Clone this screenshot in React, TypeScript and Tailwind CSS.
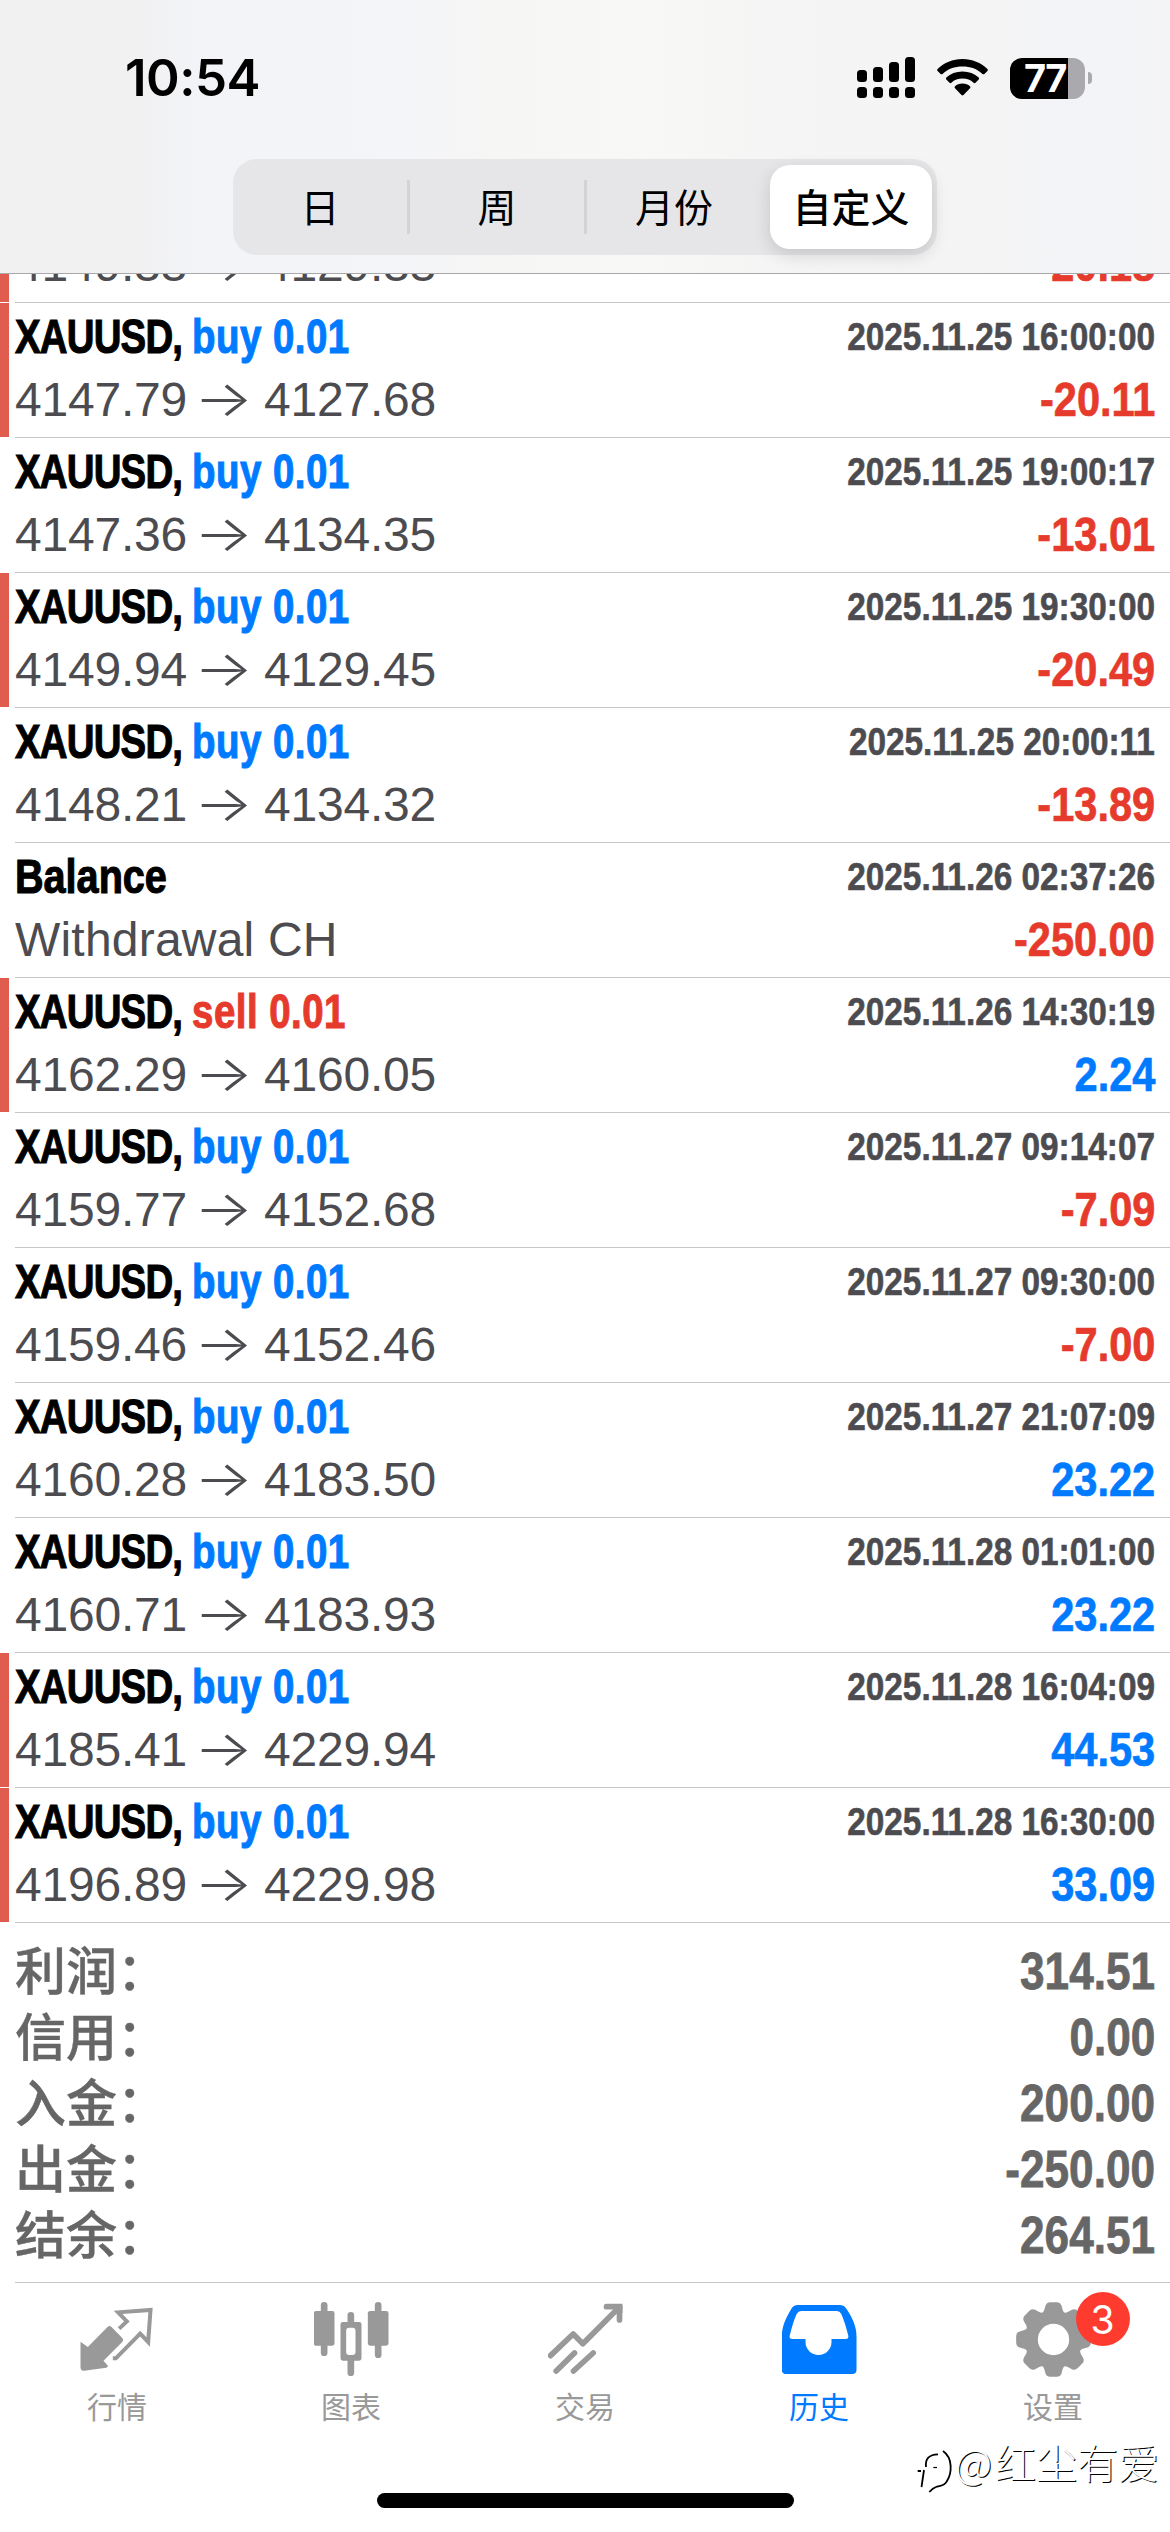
import { useState } from "react";
import type { ReactNode } from "react";
import clsx from "clsx";

type Deal = {
  symbol?: string;
  side?: "buy" | "sell";
  open?: string;
  close?: string;
  note?: string;
  time?: string;
  profit: string;
  marked?: boolean;
};

// the row that is scrolled halfway under the header
const SCROLLED: Deal = { open: "4149.33", close: "4129.33", profit: "-20.18", marked: true };

const DEALS: Deal[] = [
  { symbol: "XAUUSD", side: "buy", open: "4147.79", close: "4127.68", time: "2025.11.25 16:00:00", profit: "-20.11", marked: true },
  { symbol: "XAUUSD", side: "buy", open: "4147.36", close: "4134.35", time: "2025.11.25 19:00:17", profit: "-13.01" },
  { symbol: "XAUUSD", side: "buy", open: "4149.94", close: "4129.45", time: "2025.11.25 19:30:00", profit: "-20.49", marked: true },
  { symbol: "XAUUSD", side: "buy", open: "4148.21", close: "4134.32", time: "2025.11.25 20:00:11", profit: "-13.89" },
  { symbol: "Balance", note: "Withdrawal CH", time: "2025.11.26 02:37:26", profit: "-250.00" },
  { symbol: "XAUUSD", side: "sell", open: "4162.29", close: "4160.05", time: "2025.11.26 14:30:19", profit: "2.24", marked: true },
  { symbol: "XAUUSD", side: "buy", open: "4159.77", close: "4152.68", time: "2025.11.27 09:14:07", profit: "-7.09" },
  { symbol: "XAUUSD", side: "buy", open: "4159.46", close: "4152.46", time: "2025.11.27 09:30:00", profit: "-7.00" },
  { symbol: "XAUUSD", side: "buy", open: "4160.28", close: "4183.50", time: "2025.11.27 21:07:09", profit: "23.22" },
  { symbol: "XAUUSD", side: "buy", open: "4160.71", close: "4183.93", time: "2025.11.28 01:01:00", profit: "23.22" },
  { symbol: "XAUUSD", side: "buy", open: "4185.41", close: "4229.94", time: "2025.11.28 16:04:09", profit: "44.53", marked: true },
  { symbol: "XAUUSD", side: "buy", open: "4196.89", close: "4229.98", time: "2025.11.28 16:30:00", profit: "33.09", marked: true },
];

const TOTALS = [
  { label: "利润：", value: "314.51" },
  { label: "信用：", value: "0.00" },
  { label: "入金：", value: "200.00" },
  { label: "出金：", value: "-250.00" },
  { label: "结余：", value: "264.51" },
];

const PERIODS = [
  { label: "日", width: "w-[177px]", divider: true },
  { label: "周", width: "w-[177px]", divider: true },
  { label: "月份", width: "w-[174px]", divider: false },
  { label: "自定义", width: "w-[176px]", divider: false },
];

export default function App() {
  const [period, setPeriod] = useState("自定义");
  const [tab, setTab] = useState("历史");

  return (
    <div className="relative flex h-[2532px] w-[1170px] flex-col overflow-hidden bg-white font-['Liberation_Sans','Noto_Sans_CJK_SC',sans-serif]">
      <header className="h-[274px] shrink-0 border-b border-[#a8a8aa] bg-[linear-gradient(90deg,#f1f1f1_0%,#f1f1f2_12%,#f3f4f8_18%,#f4f5f9_33%,#f6f6f5_42%,#f8f8f6_55%,#f5f5f5_66%,#f4f4f5_86%,#f3f4f8_92%,#f4f4f6_100%)]">
        <StatusBar />
        <div className="mx-auto mt-[19px] flex h-24 w-[704px] rounded-[24px] bg-[#e6e6e8]">
          {PERIODS.map((p) => (
            <button
              key={p.label}
              onClick={() => setPeriod(p.label)}
              className={clsx("flex items-center", p.width)}
            >
              <span
                className={clsx(
                  "flex h-[84px] items-center justify-center pb-1 text-[39px] leading-none text-black",
                  "font-['Noto_Sans_CJK_SC',sans-serif]",
                  p.label === period
                    ? "ml-[9px] w-[162px] shrink-0 rounded-[20px] bg-white font-medium shadow-[0_6px_18px_rgba(0,0,0,0.14)]"
                    : "flex-1 font-normal"
                )}
              >
                {p.label}
              </span>
              {p.divider && <span className="h-[54px] w-[3px] bg-[#d3d3d6]" />}
            </button>
          ))}
        </div>
      </header>

      <main className="shrink-0">
        <div className="flex h-[29px] overflow-hidden">
          <div className={clsx("mb-px w-[9px]", SCROLLED.marked && "bg-[#e05c4f]")} />
          <div className="ml-[6px] flex flex-1 flex-col justify-end border-b border-[#c6c6c8] pr-[15px] pb-[9px]">
            <PriceLine deal={SCROLLED} />
          </div>
        </div>
        {DEALS.map((d) => (
          <DealRow key={d.time} deal={d} />
        ))}
      </main>

      <section className="ml-[15px] h-[360px] shrink-0 border-b border-[#c6c6c8] pt-4 pr-[15px] text-[51px] text-[#666]">
        {TOTALS.map((t) => (
          <div key={t.label} className="flex h-[66px] items-center justify-between">
            <span className="pb-[7px] font-['Noto_Sans_CJK_SC',sans-serif] leading-[59px] font-medium [-webkit-text-stroke:0.4px]">
              {t.label}
            </span>
            <span className="origin-right scale-x-[0.865] leading-[66px] font-bold [-webkit-text-stroke:0.8px]">
              {t.value}
            </span>
          </div>
        ))}
      </section>

      <nav className="flex pt-[19px]">
        <Tab label="行情" active={tab === "行情"} onSelect={setTab}>
          <QuotesIcon />
        </Tab>
        <Tab label="图表" active={tab === "图表"} onSelect={setTab}>
          <ChartIcon />
        </Tab>
        <Tab label="交易" active={tab === "交易"} onSelect={setTab}>
          <TradeIcon />
        </Tab>
        <Tab label="历史" active={tab === "历史"} onSelect={setTab}>
          <HistoryIcon />
        </Tab>
        <Tab label="设置" active={tab === "设置"} onSelect={setTab} badge="3">
          <SettingsIcon />
        </Tab>
      </nav>

      <div className="mx-auto mt-auto mb-6 h-[15px] w-[417px] rounded-full bg-black" />
      <Watermark />
    </div>
  );
}

function DealRow({ deal }: { deal: Deal }) {
  return (
    <div className="flex h-[135px]">
      <div className={clsx("mb-px w-[9px]", deal.marked && "bg-[#e05c4f]")} />
      <div className="ml-[6px] flex flex-1 flex-col gap-[7px] border-b border-[#c6c6c8] pt-[6px] pr-[15px]">
        <div className="flex h-14 items-center justify-between font-bold">
          <span
            className={clsx(
              "origin-left text-5xl leading-[56px] whitespace-pre text-black [-webkit-text-stroke:1.1px]",
              deal.side ? "scale-x-[0.8]" : "scale-x-[0.825]"
            )}
          >
            {deal.side ? (
              <>
                <span className="tracking-[-1px]">{deal.symbol}, </span>
                <span
                  className={clsx(
                    "tracking-[0.6px]",
                    deal.side === "buy" ? "text-[#007aff]" : "text-[#e63b2c]"
                  )}
                >
                  {deal.side} 0.01
                </span>
              </>
            ) : (
              deal.symbol
            )}
          </span>
          <span className="origin-right scale-x-[0.855] text-[39px] leading-[56px] whitespace-pre text-[#4c4c50] [-webkit-text-stroke:0.6px]">
            {deal.time}
          </span>
        </div>
        <PriceLine deal={deal} />
      </div>
    </div>
  );
}

function PriceLine({ deal }: { deal: Deal }) {
  const loss = deal.profit.startsWith("-");
  return (
    <div className="flex h-14 shrink-0 items-center justify-between text-5xl leading-[56px]">
      {deal.note ? (
        <span className="tracking-[0.2px] text-[#4c4c50]">{deal.note}</span>
      ) : (
        <span className="flex items-center text-[#4c4c50]">
          <span className="w-[174px] tracking-[-0.2px]">{deal.open}</span>
          <span className="-mt-1 mr-[6px] w-[69px] scale-x-[1.24] text-center font-['Inter',sans-serif] text-[50px] font-light">
            →
          </span>
          <span className="tracking-[-0.2px]">{deal.close}</span>
        </span>
      )}
      <span
        className={clsx(
          "origin-right scale-x-[0.865] font-bold [-webkit-text-stroke:0.7px]",
          loss ? "text-[#e63b2c]" : "text-[#007aff]"
        )}
      >
        {deal.profit}
      </span>
    </div>
  );
}

function StatusBar() {
  return (
    <div className="flex h-[140px] items-start justify-between pr-[78px] pl-[125px]">
      <span className="mt-[48px] font-['Inter',sans-serif] text-[51px] leading-[60px] font-semibold tracking-[-0.5px] text-black">
        10:54
      </span>
      <div className="mt-[57px] flex">
        <svg width="58" height="42" viewBox="0 0 58 42">
          <rect x="0" y="13" width="10" height="12" rx="3.5" />
          <rect x="16" y="10" width="10" height="15" rx="3.5" />
          <rect x="32" y="5" width="10" height="20" rx="3.5" />
          <rect x="48" y="0" width="10" height="25" rx="3.5" />
          <rect x="0" y="30" width="10" height="11" rx="3.5" />
          <rect x="16" y="30" width="10" height="11" rx="3.5" />
          <rect x="32" y="30" width="10" height="11" rx="3.5" />
          <rect x="48" y="30" width="10" height="11" rx="3.5" />
        </svg>
        <svg className="mt-[2px] ml-[22px]" width="51" height="37" viewBox="0 0 51 37">
          <path d="M25.500 0C35.300 0 44 3.800 50.400 10Q51.300 10.900 50.400 11.900L47.400 14.900Q46.500 15.800 45.500 14.900C40.300 9.900 33.300 7.500 25.500 7.500S10.700 9.900 5.500 14.900Q4.500 15.800 3.600 14.900L0.600 11.900Q-0.300 10.900 0.600 10C7 3.800 15.700 0 25.500 0Z" />
          <path d="M25.500 12.400C32 12.400 37.500 14.600 41.700 18.600Q42.600 19.600 41.700 20.500L38.500 23.700Q37.600 24.600 36.600 23.700C33.600 21 29.900 19.600 25.500 19.600S17.400 21 14.400 23.700Q13.400 24.600 12.500 23.700L9.300 20.500Q8.400 19.600 9.300 18.600C13.500 14.600 19 12.400 25.500 12.400Z" />
          <path d="M25.500 24.600C28.700 24.600 31 25.600 33 27.300Q34 28.300 33 29.300L26.500 36Q25.500 36.900 24.500 36L18 29.300Q17 28.300 18 27.300C20 25.600 22.300 24.600 25.500 24.600Z" />
        </svg>
        <div className="ml-[22px] flex items-center">
          <div className="h-[41px] w-[75px] rounded-[12px] bg-[linear-gradient(90deg,#000_78%,#a9a9ae_78%)]">
            <span className="block pl-[14px] text-left font-['Inter',sans-serif] text-[38px] leading-[41px] font-bold tracking-[-1.5px] text-white">
              77
            </span>
          </div>
          <div className="ml-[3px] h-3 w-[4px] rounded-r-full bg-[#a9a9ae]" />
        </div>
      </div>
    </div>
  );
}

function Tab({
  label,
  active,
  badge,
  onSelect,
  children,
}: {
  label: string;
  active: boolean;
  badge?: string;
  onSelect: (label: string) => void;
  children: ReactNode;
}) {
  return (
    <button
      onClick={() => onSelect(label)}
      className={clsx(
        "flex flex-1 flex-col items-center",
        active ? "text-[#007aff]" : "text-[#999]"
      )}
    >
      <span className="relative h-[75px] w-[75px]">
        {children}
        {badge && (
          <span className="absolute -top-[10px] left-[60px] flex h-[54px] w-[54px] items-center justify-center rounded-full bg-[#ff3b30] font-['Inter',sans-serif] text-[39px] leading-none text-white">
            {badge}
          </span>
        )}
      </span>
      <span className="mt-[10px] font-['Noto_Sans_CJK_SC',sans-serif] text-[30px] leading-9">
        {label}
      </span>
    </button>
  );
}

function QuotesIcon() {
  return (
    <svg width="75" height="75" viewBox="238.500 96 225 225" fill="currentColor">
      <path d="M240 215L262 231L321 171Q327 165 333 171L366 205Q370 210 366 215L309 272L322 287Q323 292 317 293L251 302Q240 303 240 292Z" />
      <path
        d="M356 176L379 154L353 127L450 120L443 216L419 191L346 265H337"
        fill="none"
        stroke="currentColor"
        strokeWidth="12"
      />
    </svg>
  );
}

function ChartIcon() {
  return (
    <svg width="75" height="75" viewBox="940.500 96 225 225" fill="currentColor">
      <rect x="961" y="96" width="20" height="162" rx="10" />
      <rect x="940" y="123" width="62" height="104" rx="7" />
      <rect x="1123" y="96" width="20" height="168" rx="10" />
      <rect x="1102" y="123" width="62" height="104" rx="7" />
      <path
        fillRule="evenodd"
        d="M1041 156V136a10 10 0 0 1 20 0v20h15q7 0 7 7v102q0 7 -7 7h-15v36a10 10 0 0 1 -20 0v-36h-14q-7 0 -7 -7v-102q0 -7 7 -7zM1046 173q-9 0 -9 9v64q0 9 9 9h10q9 0 9 -9v-64q0 -9 -9 -9z"
      />
    </svg>
  );
}

function TradeIcon() {
  return (
    <svg
      width="75"
      height="75"
      viewBox="442.500 96 225 225"
      fill="none"
      stroke="currentColor"
      strokeWidth="17"
      strokeLinecap="round"
    >
      <path d="M450 257L518 192L547 221L657 111" strokeLinejoin="round" />
      <path d="M618 110H657V150" />
      <path d="M467 303L522 249M519 303L578 249" />
      <path d="M640 102H660Q666 102 666 108V130Z" fill="currentColor" stroke="none" />
    </svg>
  );
}

function HistoryIcon() {
  return (
    <svg width="75" height="75" viewBox="34.500 96 225 225" fill="currentColor">
      <path
        fillRule="evenodd"
        d="M82 105H208Q220 105 226 114C244 140 258 168 258 198V299Q258 312 245 312H47Q34 312 34 299V198C34 168 48 140 64 114Q70 105 82 105ZM92 123Q83 123 79 131Q68 153 58 196Q55 207 66 207H105V216A39 39 0 0 0 183 216V207H226Q236 207 233 196Q224 158 212 131Q208 123 199 123Z"
      />
    </svg>
  );
}

function SettingsIcon() {
  return (
    <svg width="75" height="75" viewBox="-112.500 -112.500 225 225" fill="currentColor">
      {[0, 45, 90, 135, 180, 225, 270, 315].map((a) => (
        <path
          key={a}
          transform={`rotate(${a})`}
          d="M-36 -78C-28 -82 -27 -92 -24 -102Q-20 -112 -10 -112H10Q20 -112 24 -102C27 -92 28 -82 36 -78L20 -60H-20Z"
        />
      ))}
      <circle r="66.500" fill="none" stroke="currentColor" strokeWidth="39" />
    </svg>
  );
}

function Watermark() {
  return (
    <div className="absolute top-[2436px] right-[11px] flex items-start text-white">
      <svg className="mt-[12px]" width="36" height="48" viewBox="0 0 36 48" fill="none" stroke="#000">
        <path d="M0.700 23H4M7 22L4.500 39M9 19C8 11 12 6.500 21 6.300" strokeWidth="1.800" />
        <path d="M26 3C36 10 35 25 30 33C28 38 22 38 19 39Q16 40 12.300 44" strokeWidth="1.800" />
        <path d="M16.300 19.500H20" strokeWidth="1.200" />
      </svg>
      <span className="ml-[2px] font-['Noto_Sans_CJK_SC',sans-serif] text-[41px] leading-[50px] font-light [text-shadow:1px_1px_0_#000]">
        <span className="tracking-[3px]">@</span>红尘有爱
      </span>
    </div>
  );
}
